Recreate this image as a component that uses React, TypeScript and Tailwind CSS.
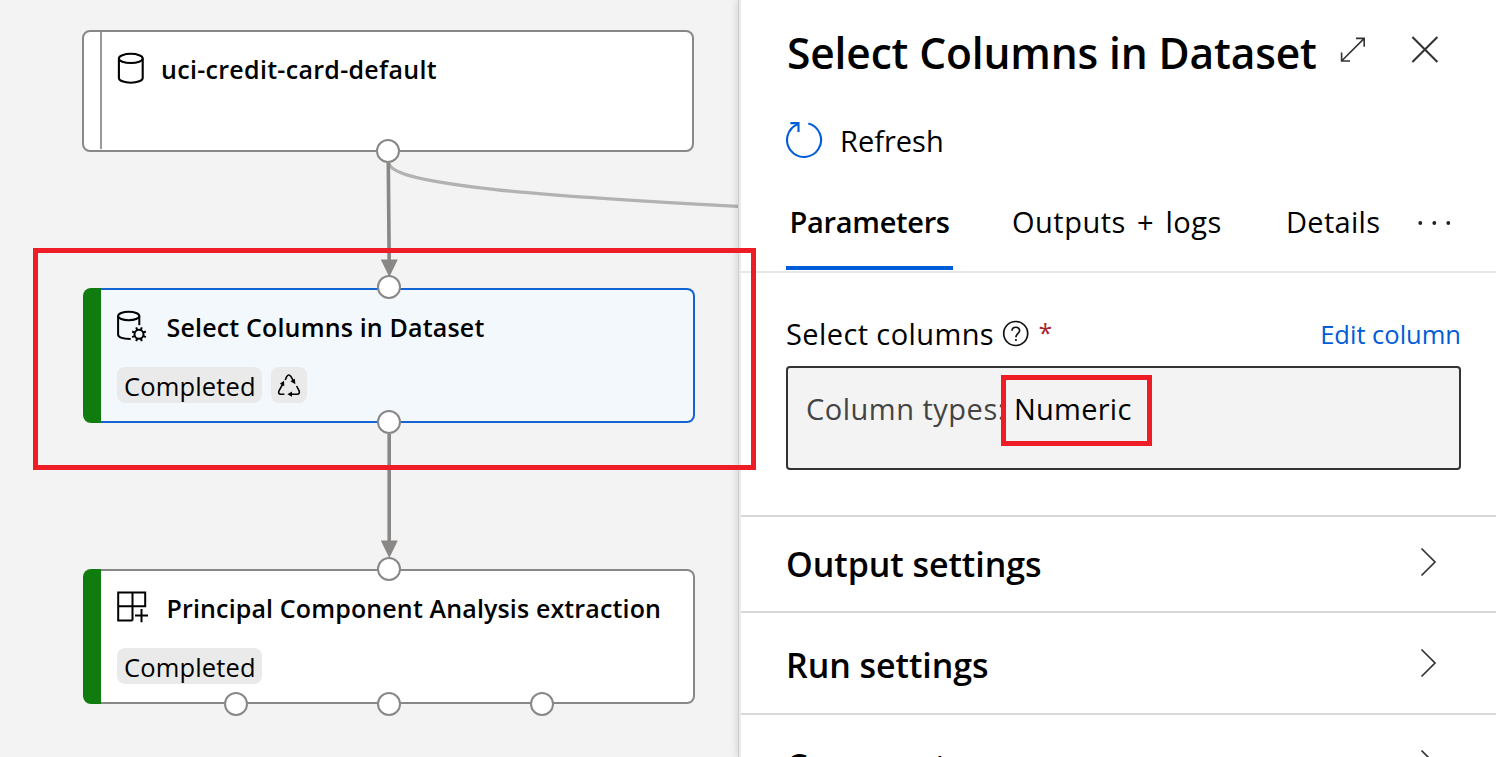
import React from "react";

function DatasetIcon() {
  return (
    <svg className="block h-[34px] w-8 shrink-0" viewBox="0 0 32 34" fill="none" stroke="#000" strokeWidth="2.1">
      <ellipse cx="13.8" cy="6.4" rx="11.9" ry="4.6" />
      <path d="M1.9 6.4V26c0 2.6 5.3 4.7 11.9 4.7s11.9-2.1 11.9-4.7V6.4" />
    </svg>
  );
}

function DatasetGearIcon() {
  const teeth = [0, 45, 90, 135, 180, 225, 270, 315];
  return (
    <svg className="block h-[34px] w-8 shrink-0" viewBox="0 0 32 34" fill="none" stroke="#000" strokeWidth="2">
      <ellipse cx="11.7" cy="6" rx="10.6" ry="4.2" />
      <path d="M1.1 6v18.6c0 2.7 5.3 4.3 12.6 4.4" />
      <path d="M22.3 6v9.2" />
      <circle cx="22" cy="24.3" r="4.5" />
      {teeth.map((angle) => (
        <path key={angle} d="M22 20v-3.1" transform={`rotate(${angle + 22.5} 22 24.3)`} />
      ))}
    </svg>
  );
}

function ComponentIcon() {
  return (
    <svg className="block h-[34px] w-8 shrink-0" viewBox="0 0 32 34" fill="none" stroke="#000" strokeWidth="2">
      <path d="M15.5 29.5H1.2V1.4H28.2V15.2H1.2M15.5 1.4v28.1" />
      <path d="M24.5 18v13.2M18 24.6h13" />
    </svg>
  );
}

function RecycleIcon() {
  return (
    <svg className="block size-6" viewBox="0 0 24 24" fill="none" stroke="#000" strokeWidth="1.6">
      <path d="M8.2 7 9.8 3.4Q11.8.6 13.7 3.2L16 7.2" />
      <path d="M5.8 10.8 1.9 18Q1 21 3.6 21.2H7.4" />
      <path d="M19.6 13 22.2 18Q23 21 20.2 21.2H13" />
      <path d="m18.4 11.3-5-3 4.4-2.6zM7 7.8l.3 5.4L2.8 10.8zM10.4 21.2l4.6-2.7v5.2z" fill="#000" stroke="none" />
    </svg>
  );
}

function Badge({ children }: { children: React.ReactNode }) {
  return (
    <div className="flex h-9 items-center justify-center rounded-lg bg-[#eaeaea] px-1.5">{children}</div>
  );
}

function Completed() {
  return (
    <Badge>
      <span className="w-[133px] pt-px pl-px text-[25.5px] leading-[34px] tracking-[0.15px] whitespace-nowrap">
        Completed
      </span>
    </Badge>
  );
}

function Port({ className }: { className: string }) {
  return <span className={`absolute size-6 rounded-full border-2 border-[#8a8886] bg-white ${className}`} />;
}

function GraphCanvas() {
  return (
    <section className="relative h-full w-[738px] shrink-0 bg-[#f3f3f3]">
      <svg className="absolute inset-0 size-full" viewBox="0 0 738 757" fill="none">
        <path d="M389 163C391 186 560 197 739 206.5" stroke="#b3b2b1" strokeWidth="3.3" />
        <path d="M388.3 163 389.2 264M389.2 434v110" stroke="#8a8886" strokeWidth="3.6" />
        <path d="M380.8 259.5h17l-8.5 17.5zM380.8 540.5h17l-8.5 17.5z" fill="#8a8886" />
      </svg>

      <article className="absolute top-[30px] left-[82px] flex h-[122px] w-[612px] rounded-lg border-2 border-[#8a8886] bg-white">
        <div className="mb-px w-[18px] border-r-2 border-[#9b9998]" />
        <header className="flex h-[54px] items-start gap-3 pt-5 pl-[15px]">
          <DatasetIcon />
          <h2 className="text-[25px] leading-[34px] font-semibold tracking-[0.3px] whitespace-nowrap">
            uci-credit-card-default
          </h2>
        </header>
      </article>

      <article className="absolute top-[288px] left-[83px] flex h-[135px] w-[612px]">
        <div className="w-[18px] rounded-l-lg bg-[#107c10]" />
        <div className="flex-1 rounded-r-lg border-2 border-l-0 border-[#1463d4] bg-[#f3f8fd] pt-5 pl-4">
          <header className="flex items-start gap-[17.5px]">
            <DatasetGearIcon />
            <h2 className="text-[25px] leading-[34px] font-semibold tracking-[0.17px] whitespace-nowrap">
              Select Columns in Dataset
            </h2>
          </header>
          <div className="mt-[23px] flex gap-[9px]">
            <Completed />
            <Badge>
              <RecycleIcon />
            </Badge>
          </div>
        </div>
      </article>

      <article className="absolute top-[569px] left-[83px] flex h-[135px] w-[612px]">
        <div className="w-[18px] rounded-l-lg bg-[#107c10]" />
        <div className="flex-1 rounded-r-lg border-2 border-l-0 border-[#8a8886] bg-white pt-5 pl-4">
          <header className="flex items-start gap-[17.5px]">
            <ComponentIcon />
            <h2 className="text-[25px] leading-[34px] font-semibold tracking-[0.14px] whitespace-nowrap">
              Principal Component Analysis extraction
            </h2>
          </header>
          <div className="mt-[23px] flex">
            <Completed />
          </div>
        </div>
      </article>

      <Port className="top-[139px] left-[376px]" />
      <Port className="top-[275px] left-[377px]" />
      <Port className="top-[410px] left-[377px]" />
      <Port className="top-[557px] left-[377px]" />
      <Port className="top-[692px] left-[224px]" />
      <Port className="top-[692px] left-[377px]" />
      <Port className="top-[692px] left-[530px]" />
    </section>
  );
}

function SettingsRow({ title, className }: { title: string; className: string }) {
  return (
    <button className={`flex w-full shrink-0 items-start justify-between border-t-2 border-[#d9d9d9] pr-[59px] pl-[45px] text-left ${className}`}>
      <span className="text-[34px] leading-[46px] font-semibold tracking-[-0.06px] whitespace-nowrap">{title}</span>
      <svg className="mt-[6px] h-[30px] w-[18px]" viewBox="0 0 18 30" fill="none" stroke="#333" strokeWidth="1.7">
        <path d="M2.5 1.5 16 15 2.5 28.5" />
      </svg>
    </button>
  );
}

function DetailsPanel() {
  return (
    <aside className="relative flex h-full min-w-0 flex-1 flex-col border-l border-[#cdcdcd] bg-white shadow-[0_0_8px_rgba(0,0,0,0.16)]">
      <div className="flex h-full flex-col overflow-hidden border-l-2 border-[#ebebeb]">
        <header className="flex h-[107px] shrink-0 pt-[23px] pl-[45px]">
          <h1 className="w-[553px] pl-px text-[42.5px] leading-[60px] font-semibold tracking-[-0.14px] whitespace-nowrap">
            Select Columns in Dataset
          </h1>
          <svg className="mt-[13px] size-7" viewBox="0 0 28 28" fill="none" stroke="#333" strokeWidth="1.6">
            <path d="M2.8 24.8 25 2.6M17 2.4h8.2v8.4M2.6 16.6V25H11" />
          </svg>
          <svg className="mt-[12px] ml-[43px] size-[30px]" viewBox="0 0 30 30" fill="none" stroke="#333" strokeWidth="2.1">
            <path d="m2.4 2 25 25M27.4 2l-25 25" />
          </svg>
        </header>

        <button className="flex h-[68px] shrink-0 items-center pb-[2px] pl-[43px] text-left">
          <svg className="size-10" viewBox="0 0 40 40" fill="none" stroke="#015cda" strokeWidth="2.1">
            <path d="M24.3 3.5A17 17 0 1 1 13.7 4.2" />
            <path d="M6.4 3.1h8.1v9" />
          </svg>
          <span className="ml-[16px] pt-[2px] text-[29px] leading-10">Refresh</span>
        </button>

        <nav className="flex h-[98px] shrink-0 border-b-2 border-[#e8e8e8] pt-[25px] pl-[45px] text-[29px] leading-[44px] whitespace-nowrap">
          <div className="mb-px w-[167px] border-b-4 border-[#015cda] pl-[3.5px] font-semibold tracking-[-0.3px]">
            Parameters
          </div>
          <div className="ml-[59px] w-[274px] tracking-[0.5px] [word-spacing:3.2px]">Outputs + logs</div>
          <div className="w-[132px] tracking-[0.3px]">Details</div>
          <svg className="mt-[15px] h-4 w-9" viewBox="0 0 36 16" fill="#222">
            <circle cx="2.3" cy="8" r="1.9" />
            <circle cx="16.3" cy="8" r="1.9" />
            <circle cx="30.3" cy="8" r="1.9" />
          </svg>
        </nav>

        <div className="h-[242px] shrink-0 pt-[39px] pr-[35px] pl-[45px]">
          <div className="flex h-[54px] items-start whitespace-nowrap">
            <span className="w-[216px] text-[29px] leading-[44px] tracking-[0.4px]">Select columns</span>
            <svg className="mt-2 size-7" viewBox="0 0 28 28" fill="none" stroke="#111" strokeWidth="1.7">
              <circle cx="13.7" cy="13.5" r="12" />
              <path d="M10 10.8c.2-4.8 7.7-4.6 7.6-.2 0 3-3.7 3.3-3.7 6.6" />
              <circle cx="13.9" cy="20" r="1.1" fill="#111" stroke="none" />
            </svg>
            <span className="ml-[8.5px] text-[25px] leading-[40px] text-[#a4262c]">*</span>
            <a className="ml-auto text-[25.5px] leading-[44px] text-[#015cda]">Edit column</a>
          </div>
          <div className="flex h-[104px] rounded border-2 border-[#333] bg-[#f3f3f3] pt-[19px] pl-[18px] text-[29px] leading-[44px] whitespace-nowrap">
            <span className="w-[208px] tracking-[0.5px] text-[#444]">Column types:</span>
            <span className="tracking-[0.25px]">Numeric</span>
          </div>
        </div>

        <SettingsRow title="Output settings" className="h-24 pt-[24px]" />
        <SettingsRow title="Run settings" className="h-[102px] pt-[29px]" />
        <SettingsRow title="Comment" className="h-[102px] pt-[28px]" />
      </div>
    </aside>
  );
}

export default function App() {
  return (
    <main className="relative flex h-[757px] w-[1496px] overflow-hidden bg-white font-['Open_Sans','Noto_Sans',sans-serif] text-black">
      <GraphCanvas />
      <DetailsPanel />
      <div className="absolute top-[248px] left-[33px] h-[222px] w-[723px] border-5 border-[#ee1c25]" />
      <div className="absolute top-[375px] left-[1001px] h-[71px] w-[151px] border-5 border-[#ee1c25]" />
    </main>
  );
}
